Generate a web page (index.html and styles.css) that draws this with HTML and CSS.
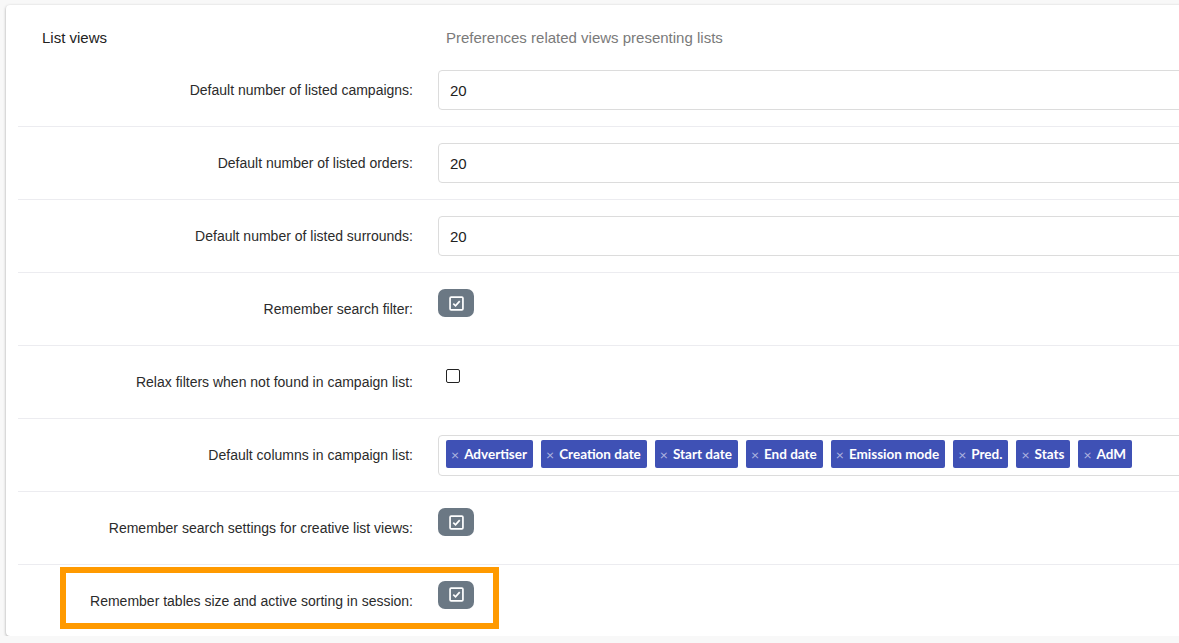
FILE: index.html
```html
<!DOCTYPE html>
<html lang="en">
<head>
  <meta charset="UTF-8">
  <title>Preferences - List views</title>
  <link rel="stylesheet" href="styles.css">
</head>
<body>
  <div class="card">
    <div class="card-header">
      <div class="section-title">List views</div>
      <div class="section-desc">Preferences related views presenting lists</div>
    </div>

    <div class="form-row">
      <label class="row-label">Default number of listed campaigns:</label>
      <div class="row-control"><input class="text-input" type="text" value="20"></div>
    </div>

    <div class="form-row">
      <label class="row-label">Default number of listed orders:</label>
      <div class="row-control"><input class="text-input" type="text" value="20"></div>
    </div>

    <div class="form-row">
      <label class="row-label">Default number of listed surrounds:</label>
      <div class="row-control"><input class="text-input" type="text" value="20"></div>
    </div>

    <div class="form-row">
      <label class="row-label">Remember search filter:</label>
      <div class="row-control raised">
        <button class="check-btn">
          <svg width="15" height="15" viewBox="0 0 14 14"><rect x="1" y="1" width="12" height="12" rx="1" fill="none" stroke="#fff" stroke-width="1.6"/><path d="M4 7.2 L6.1 9.2 L10 4.8" fill="none" stroke="#fff" stroke-width="1.6"/></svg>
        </button>
      </div>
    </div>

    <div class="form-row">
      <label class="row-label">Relax filters when not found in campaign list:</label>
      <div class="row-control raised">
        <span class="plain-check"></span>
      </div>
    </div>

    <div class="form-row">
      <label class="row-label">Default columns in campaign list:</label>
      <div class="row-control">
        <div class="tag-input">
          <span class="tag"><span class="tag-x">×</span>Advertiser</span>
          <span class="tag"><span class="tag-x">×</span>Creation date</span>
          <span class="tag"><span class="tag-x">×</span>Start date</span>
          <span class="tag"><span class="tag-x">×</span>End date</span>
          <span class="tag"><span class="tag-x">×</span>Emission mode</span>
          <span class="tag"><span class="tag-x">×</span>Pred.</span>
          <span class="tag"><span class="tag-x">×</span>Stats</span>
          <span class="tag"><span class="tag-x">×</span>AdM</span>
        </div>
      </div>
    </div>

    <div class="form-row">
      <label class="row-label">Remember search settings for creative list views:</label>
      <div class="row-control raised">
        <button class="check-btn">
          <svg width="15" height="15" viewBox="0 0 14 14"><rect x="1" y="1" width="12" height="12" rx="1" fill="none" stroke="#fff" stroke-width="1.6"/><path d="M4 7.2 L6.1 9.2 L10 4.8" fill="none" stroke="#fff" stroke-width="1.6"/></svg>
        </button>
      </div>
    </div>

    <div class="form-row last">
      <label class="row-label">Remember tables size and active sorting in session:</label>
      <div class="row-control raised">
        <button class="check-btn">
          <svg width="15" height="15" viewBox="0 0 14 14"><rect x="1" y="1" width="12" height="12" rx="1" fill="none" stroke="#fff" stroke-width="1.6"/><path d="M4 7.2 L6.1 9.2 L10 4.8" fill="none" stroke="#fff" stroke-width="1.6"/></svg>
        </button>
      </div>
      <div class="highlight"></div>
    </div>
  </div>
</body>
</html>
```

FILE: styles.css
```css
* {
  box-sizing: border-box;
}

body {
  margin: 0;
  padding: 5px 0 0 6px;
  background: #f8f8f8;
  font-family: "Liberation Sans", Arial, sans-serif;
  color: #333;
  overflow: hidden;
}

.card {
  width: 1260px;
  height: 631px;
  background: #fff;
  border-radius: 4px;
  box-shadow: 0 1px 3px rgba(0, 0, 0, 0.35);
  padding-left: 12px;
}

.card-header {
  display: grid;
  grid-template-columns: 395px 1fr;
  column-gap: 33px;
  height: 49px;
  padding-top: 24px;
}

.section-title {
  font-size: 15px;
  padding-left: 24px;
  line-height: 18px;
  color: #222;
}

.section-desc {
  font-size: 15px;
  line-height: 18px;
  color: #7a7a7a;
}

.form-row {
  display: grid;
  grid-template-columns: 395px 1fr;
  column-gap: 25px;
  align-items: center;
  height: 73px;
  border-bottom: 1px solid #ececf0;
  position: relative;
}

.form-row.last {
  border-bottom: none;
  height: 71px;
}

.row-label {
  text-align: right;
  font-size: 14px;
  color: #2b2b2b;
}

.row-control.raised {
  margin-bottom: 12px;
  display: flex;
}

.text-input {
  width: 800px;
  height: 40px;
  border: 1px solid #dcdcdc;
  border-radius: 4px;
  padding: 0 11px;
  font-family: "Liberation Sans", Arial, sans-serif;
  font-size: 15px;
  color: #222;
  outline: none;
}

.check-btn {
  width: 36px;
  height: 28px;
  border: none;
  border-radius: 7px;
  background: #6b7884;
  display: flex;
  align-items: center;
  justify-content: center;
  padding: 0;
}

.plain-check {
  width: 14px;
  height: 14px;
  margin-left: 8px;
  border: 1.5px solid #222;
  border-radius: 2px;
}

.tag-input {
  width: 800px;
  height: 41px;
  border: 1px solid #dcdcdc;
  border-radius: 4px;
  padding: 0 7px;
  display: flex;
  align-items: center;
  gap: 8px;
}

.tag {
  display: inline-flex;
  align-items: center;
  height: 28px;
  padding: 0 6px 0 5px;
  background: #3f51b5;
  color: #fff;
  border-radius: 2px;
  font-family: Lato, sans-serif;
  font-weight: bold;
  font-size: 13.5px;
  margin-top: -2px;
}

.tag-x {
  color: #b0b6e0;
  font-weight: normal;
  font-size: 14px;
  margin-right: 5px;
}

.highlight {
  position: absolute;
  left: 42px;
  top: 2px;
  width: 439px;
  height: 62px;
  border: 6px solid #ff9a00;
}
```
